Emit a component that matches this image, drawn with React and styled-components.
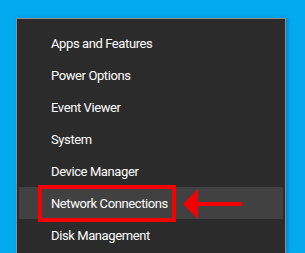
import React from "react";
import styled, { createGlobalStyle } from "styled-components";

const Global = createGlobalStyle`
  html, body { margin: 0; padding: 0; background: #03aaf0; overflow: hidden; }
  body { width: 305px; height: 253px; }
`;

const Desktop = styled.div`
  width: 305px;
  height: 253px;
  padding: 18px 0 0 16px;
  box-sizing: border-box;
  background: #03aaf0;
`;

const Menu = styled.div`
  width: 270px;
  height: 235px;
  box-sizing: border-box;
  background: #2b2b2b;
  border: 1px solid #8f8f8f;
  border-bottom: none;
  padding: 8px 2px 0 2px;
  display: flex;
  flex-direction: column;
  box-shadow: 2px 0 3px rgba(0, 60, 120, 0.35);
`;

const Item = styled.div`
  position: relative;
  flex: none;
  height: 32px;
  display: flex;
  align-items: center;
  padding-left: 32px;
  background: ${(p) => (p.$active ? "#414141" : "transparent")};
  color: #ffffff;
  font-family: Roboto, "Noto Sans", sans-serif;
  font-size: 13px;
  letter-spacing: -0.4px;
  white-space: nowrap;
`;

const Highlight = styled.div`
  position: absolute;
  left: 19px;
  top: -2px;
  width: 138px;
  height: 37px;
  box-sizing: border-box;
  border: 4px solid #f50000;
  pointer-events: none;
`;

const Arrow = styled.svg`
  position: absolute;
  left: 164px;
  top: 2px;
`;

const items = [
  "Apps and Features",
  "Power Options",
  "Event Viewer",
  "System",
  "Device Manager",
  "Network Connections",
  "Disk Management",
];

export default function App() {
  return (
    <>
      <Global />
      <Desktop>
        <Menu>
          {items.map((t) => {
            const active = t === "Network Connections";
            return (
              <Item key={t} $active={active}>
                {t}
                {active && (
                  <>
                    <Highlight />
                    <Arrow width="62" height="32" viewBox="0 0 62 32">
                      <polygon points="0,15 15,0 15,30" fill="#f50000" />
                      <rect x="14" y="13" width="45" height="4" fill="#f50000" />
                    </Arrow>
                  </>
                )}
              </Item>
            );
          })}
        </Menu>
      </Desktop>
    </>
  );
}
